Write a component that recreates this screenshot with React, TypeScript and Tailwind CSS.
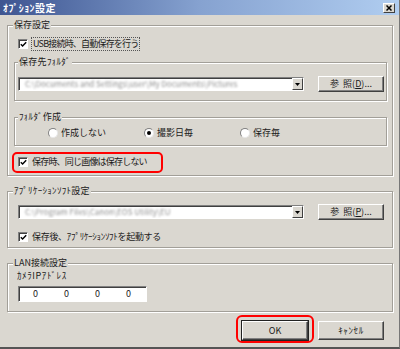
import React from "react";

const Check = () => (
  <span className="flex h-[10px] w-[10px] shrink-0 items-center justify-center border border-t-[#808080] border-l-[#808080] border-b-white border-r-white bg-white shadow-[inset_1px_1px_0_#404040]">
    <svg width="7" height="7" viewBox="0 0 7 7">
      <path d="M0.8 3.2 L2.6 5 L6.2 1.2" stroke="#000" strokeWidth="1.4" fill="none" />
    </svg>
  </span>
);

const Radio = ({ on }: { on?: boolean }) => (
  <span className="flex h-[10px] w-[10px] shrink-0 items-center justify-center rounded-full border border-t-[#808080] border-l-[#808080] border-b-[#e8e8e8] border-r-[#e8e8e8] bg-white">
    {on && <span className="h-[4px] w-[4px] rounded-full bg-black" />}
  </span>
);

const Group = ({
  label,
  className = "",
  legend = "ml-[5px]",
  children,
}: {
  label: string;
  className?: string;
  legend?: string;
  children: React.ReactNode;
}) => (
  <fieldset
    className={`min-w-0 border border-[#a29f98] shadow-[1px_1px_0_#fff,inset_1px_1px_0_#fff] ${className}`}
  >
    <legend className={`${legend} bg-[#dad7d0] px-[1px] leading-[12px]`}>{label}</legend>
    {children}
  </fieldset>
);

const Combo = ({ text }: { text: string }) => (
  <div className="flex h-[14px] w-[286px] shrink-0 items-stretch overflow-hidden border border-t-[#808080] border-l-[#808080] border-b-white border-r-white bg-white shadow-[inset_1px_1px_0_#404040]">
    <span className="min-w-0 flex-1 whitespace-nowrap pl-[6px] text-[8px] leading-[12px] text-[#8f8f8f] blur-[1.1px]">
      {text}
    </span>
    <span className="flex w-[11px] shrink-0 items-center justify-center border border-t-white border-l-white border-b-[#404040] border-r-[#404040] bg-[#dad7d0]">
      <svg width="5" height="3" viewBox="0 0 5 3">
        <path d="M0 0 H5 L2.5 3 Z" fill="#000" />
      </svg>
    </span>
  </div>
);

const Button = ({ children, def }: { children: React.ReactNode; def?: boolean }) => (
  <span
    className={`flex w-[66px] shrink-0 items-center justify-center border border-t-white border-l-white border-b-[#404040] border-r-[#404040] bg-[#dad7d0] shadow-[inset_-1px_-1px_0_#808080] ${
      def ? "h-[19px] outline outline-1 outline-[#222]" : "h-[16px]"
    }`}
  >
    {children}
  </span>
);

export default function App() {
  return (
    <div className="flex h-[349px] w-[400px] flex-col border-b-2 border-r border-b-[#555] border-r-[#777] bg-[#dad7d0] font-['Noto_Sans_CJK_JP',sans-serif] text-[9px] leading-[12px] text-[#1a1a1a]">
      <div className="flex h-[15px] items-center justify-between bg-linear-to-r from-[#3e5591] via-[#86a2d0] to-[#b0cdf0] pl-[3px] pr-[4px]">
        <span className="text-[10px] font-bold tracking-[0.4px] text-white">ｵﾌﾟｼｮﾝ設定</span>
        <span className="flex h-[10px] w-[12px] items-center justify-center border border-t-white border-l-white border-b-[#404040] border-r-[#404040] bg-[#dad7d0]">
          <svg width="6" height="6" viewBox="0 0 6 6">
            <path d="M0.5 0.5 L5.5 5.5 M5.5 0.5 L0.5 5.5" stroke="#000" strokeWidth="1.5" />
          </svg>
        </span>
      </div>

      <div className="flex flex-col pl-[7px] pr-[6px] pt-[4px]">
        <Group label="保存設定" className="pb-[7px]">
          <div className="mt-[7px] flex h-[12px] items-center gap-[4px] pl-[10px]">
            <Check />
            <span className="px-[1px] tracking-[-0.8px] outline outline-1 outline-dotted outline-[#555]">
              USB接続時、自動保存を行う
            </span>
          </div>

          <Group label="保存先ﾌｫﾙﾀﾞ" legend="ml-[3px] tracking-[0.3px]" className="ml-[6px] mr-[5px] mt-[6px] pb-[8px]">
            <div className="mt-[8px] flex h-[16px] items-center gap-[14px] pl-[3px] pr-[2px]">
              <Combo text="C:\Documents and Settings\user\My Documents\Pictures" />
              <Button>
                参&nbsp;&nbsp;照(<span className="underline">D</span>)...
              </Button>
            </div>
          </Group>

          <Group label="ﾌｫﾙﾀﾞ作成" legend="ml-[3px] tracking-[0.3px]" className="ml-[6px] mr-[5px] mt-[10px] pb-[6px]">
            <div className="mt-[4px] flex h-[12px] items-center pl-[33px]">
              <span className="flex w-[96px] items-center gap-[3px]">
                <Radio />
                作成しない
              </span>
              <span className="flex w-[96px] items-center gap-[3px]">
                <Radio on />
                撮影日毎
              </span>
              <span className="flex items-center gap-[3px]">
                <Radio />
                保存毎
              </span>
            </div>
          </Group>

          <div className="relative mt-[10px] flex h-[12px] items-center gap-[4px] pl-[10px]">
            <Check />
            <span className="tracking-[-0.8px]">保存時、同じ画像は保存しない</span>
            <span className="absolute left-[4px] top-[-4px] h-[21px] w-[151px] rounded-[5px] border-2 border-[#f00]" />
          </div>
        </Group>

        <Group label="ｱﾌﾟﾘｹｰｼｮﾝｿﾌﾄ設定" legend="ml-[5px] tracking-[0.3px]" className="mt-[9px] pb-[4px]">
          <div className="mt-[7px] flex h-[16px] items-center gap-[14px] pl-[10px] pr-[8px]">
            <Combo text="C:\Program Files\Canon\EOS Utility\EU" />
            <Button>
              参&nbsp;&nbsp;照(<span className="underline">P</span>)...
            </Button>
          </div>
          <div className="mt-[11px] flex h-[12px] items-center gap-[4px] pl-[10px]">
            <Check />
            <span className="tracking-[-0.3px]">保存後、ｱﾌﾟﾘｹｰｼｮﾝｿﾌﾄを起動する</span>
          </div>
        </Group>

        <Group label="LAN接続設定" className="mt-[9px] pb-[9px]">
          <div className="mt-[1px] h-[12px] pl-[9px] tracking-[0.6px]">ｶﾒﾗIPｱﾄﾞﾚｽ</div>
          <div className="ml-[10px] mt-[4px] flex h-[16px] w-[129px] items-center border border-t-[#808080] border-l-[#808080] border-b-white border-r-white bg-white pl-[1px] shadow-[inset_1px_1px_0_#404040]">
            {["0", "0", "0", "0"].map((v, i) => (
              <span key={i} className="w-[31px] text-center">
                {v}
              </span>
            ))}
          </div>
        </Group>

        <div className="mt-[9px] flex justify-end gap-[10px] pr-[9px]">
          <span className="relative">
            <Button def>OK</Button>
            <span className="absolute left-[-6px] top-[-6px] h-[28px] w-[78px] rounded-[6px] border-2 border-[#f00]" />
          </span>
          <span className="flex h-[19px] w-[66px] items-center justify-center border border-t-white border-l-white border-b-[#404040] border-r-[#404040] bg-[#dad7d0] tracking-[0.6px] shadow-[inset_-1px_-1px_0_#808080]">
            ｷｬﾝｾﾙ
          </span>
        </div>
      </div>
    </div>
  );
}
